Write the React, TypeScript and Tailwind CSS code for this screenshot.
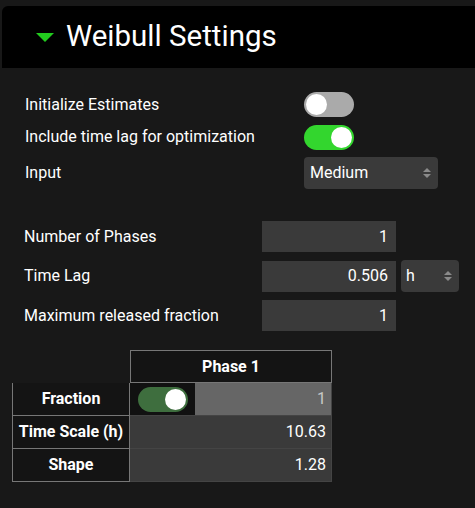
import React from 'react';

function Toggle({ on, color }: { on: boolean; color: string }) {
  return (
    <div
      className={`relative h-[25px] w-[50px] rounded-full ${color}`}
    >
      <div
        className={`absolute top-[2px] h-[21px] w-[21px] rounded-full bg-white ${on ? 'right-[2px]' : 'left-[2px]'}`}
      />
    </div>
  );
}

function Spinner() {
  return (
    <div className="flex flex-col items-center gap-[2px]">
      <div className="h-0 w-0 border-x-[4px] border-b-[4px] border-x-transparent border-b-[#8a8a8a]" />
      <div className="h-0 w-0 border-x-[4px] border-t-[4px] border-x-transparent border-t-[#8a8a8a]" />
    </div>
  );
}

function NumberField({ value }: { value: string }) {
  return (
    <div className="flex h-[31px] w-[134px] items-center justify-end bg-[#3a3a3a] pr-[8px] text-[16px] text-white">
      {value}
    </div>
  );
}

export default function App() {
  const font = { fontFamily: 'Roboto, "Liberation Sans", sans-serif' };

  return (
    <div className="h-[508px] w-[475px] overflow-hidden bg-[#181818] pt-[6px]" style={font}>
      <div className="ml-[2px] flex h-[62px] items-center rounded-tl-[6px] bg-black pl-[34px]">
        <div className="h-0 w-0 border-x-[9px] border-t-[9px] border-x-transparent border-t-[#22cc1e]" />
        <span className="ml-[12px] text-[29.5px] leading-none text-white">Weibull Settings</span>
      </div>

      <div className="mt-[24px] flex flex-col gap-[8px] pl-[25px]">
        <div className="flex h-[25px] items-center">
          <span className="w-[279px] text-[16px] text-white">Initialize Estimates</span>
          <Toggle on={false} color="bg-[#aaaaaa]" />
        </div>
        <div className="flex h-[24px] items-center">
          <span className="w-[279px] text-[16px] text-white">Include time lag for optimization</span>
          <Toggle on={true} color="bg-[#33d62e]" />
        </div>
        <div className="flex h-[32px] items-center">
          <span className="w-[279px] text-[16px] text-white">Input</span>
          <div className="flex h-[32px] w-[134px] items-center justify-between rounded-[4px] bg-[#3a3a3a] pl-[6px] pr-[7px] text-[16px] text-white">
            <span>Medium</span>
            <Spinner />
          </div>
        </div>
      </div>

      <div className="mt-[32px] flex flex-col gap-[8px] pl-[24px]">
        <div className="flex items-center">
          <span className="w-[238px] text-[16px] text-white">Number of Phases</span>
          <NumberField value="1" />
        </div>
        <div className="flex items-center">
          <span className="w-[238px] text-[16px] text-white">Time Lag</span>
          <NumberField value="0.506" />
          <div className="ml-[5px] flex h-[32px] w-[58px] items-center justify-between rounded-[4px] bg-[#3a3a3a] pl-[5px] pr-[7px] text-[16px] text-white">
            <span>h</span>
            <Spinner />
          </div>
        </div>
        <div className="flex items-center">
          <span className="w-[238px] text-[16px] text-white">Maximum released fraction</span>
          <NumberField value="1" />
        </div>
      </div>

      <div className="ml-[12px] mt-[19px] grid w-[320px] grid-cols-[118px_202px] text-[16px] font-bold text-white">
        <div />
        <div className="flex h-[33px] items-center justify-center border border-[#777777] bg-[#141414]">Phase 1</div>

        <div className="flex h-[33px] items-center justify-center border border-t-0 border-[#777777] bg-[#141414]">Fraction</div>
        <div className="flex h-[33px] border-b border-r border-[#444444]">
          <div className="flex w-[65px] items-center justify-center bg-[#111111]">
            <Toggle on={true} color="bg-[#3e6e3e]" />
          </div>
          <div className="flex flex-1 items-center justify-end bg-[#666666] pr-[5px] font-normal text-[#c8c8c8]">1</div>
        </div>

        <div className="flex h-[33px] items-center justify-center border border-t-0 border-[#777777] bg-[#141414]">Time Scale (h)</div>
        <div className="flex h-[33px] items-center justify-end border-b border-r border-[#444444] bg-[#3a3a3a] pr-[5px] font-normal">10.63</div>

        <div className="flex h-[33px] items-center justify-center border border-t-0 border-[#777777] bg-[#141414]">Shape</div>
        <div className="flex h-[33px] items-center justify-end border-b border-r border-[#444444] bg-[#3a3a3a] pr-[5px] font-normal">1.28</div>
      </div>
    </div>
  );
}
